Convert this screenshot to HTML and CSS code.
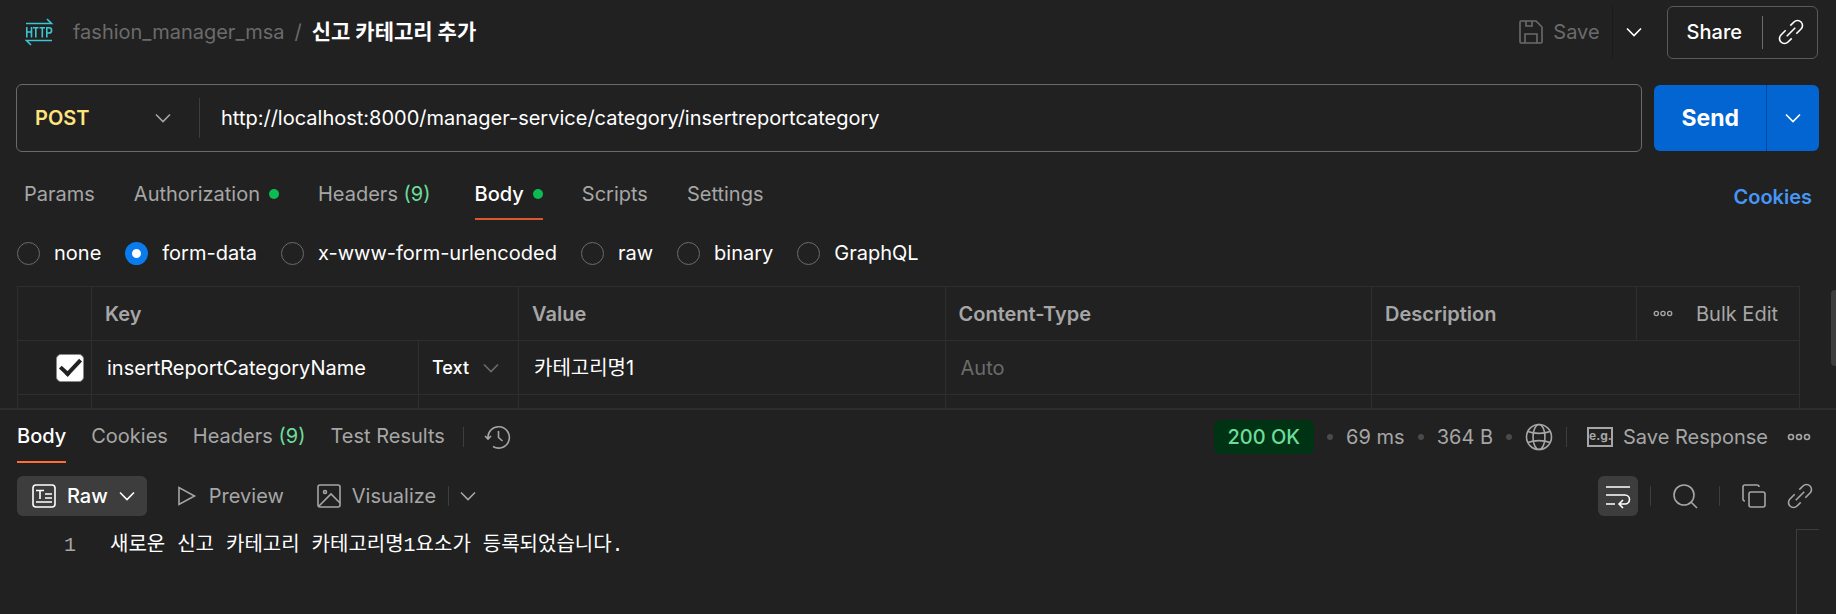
FILE: index.html
```html
<!DOCTYPE html>
<html lang="ko">
<head>
<meta charset="utf-8">
<title>신고 카테고리 추가</title>
<link rel="stylesheet" href="styles.css">
</head>
<body>
<svg class="sprite" aria-hidden="true">
  <symbol id="chevron" viewBox="0 0 16 16"><path d="M1 4.500l7 7 7-7"/></symbol>
  <symbol id="link" viewBox="0 0 24 24"><g transform="rotate(-45 12 12)"><path d="M9.500 7H2.800a5 5 0 0 0 0 10h5.200M14.500 17h6.700a5 5 0 0 0 0-10H16M6 12h12"/></g></symbol>
  <symbol id="more" viewBox="0 0 24 8"><circle cx="4" cy="4" r="2.500"/><circle cx="12" cy="4" r="2.500"/><circle cx="20" cy="4" r="2.500"/></symbol>
</svg>

<section class="request">
  <header class="topbar">
    <svg class="http-icon" viewBox="0 0 28 28" role="img" aria-label="HTTP">
      <path d="M1 5.500h25.500L22 1M27 22.500H1.500L6 27"/>
      <path d="M1.800 9v10.500M6.500 9v10.500M1.800 14h4.700M8 9.800h5.500M10.800 9.800v9.700M14.500 9.800H20M17.300 9.800v9.700M21.800 19.500V9.800H24a2.500 2.500 0 0 1 0 5.200h-2.200"/>
    </svg>
    <nav class="crumbs" aria-label="Breadcrumb"><a href="#">fashion_manager_msa</a><span class="slash">/</span><h1>신고 카테고리 추가</h1></nav>
    <div class="save-group">
      <button class="save" disabled>
        <svg class="icon24" viewBox="0 0 24 24"><path d="M2 1h15l6 6v15a1 1 0 0 1-1 1H2a1 1 0 0 1-1-1V2a1 1 0 0 1 1-1zM7 1v5h6V1M6 23v-9h12v9"/></svg>
        Save
      </button>
      <button class="save-more" aria-label="Save options"><svg class="chev"><use href="#chevron"/></svg></button>
    </div>
    <div class="share-group">
      <button class="share">Share</button>
      <button class="share-link" aria-label="Copy link"><svg class="icon24"><use href="#link"/></svg></button>
    </div>
  </header>

  <form class="url-row">
    <div class="url-box">
      <div class="method">
        <select aria-label="Method"><option>POST</option></select>
        <svg class="chev"><use href="#chevron"/></svg>
      </div>
      <input class="url" type="text" aria-label="Request URL" value="http://localhost:8000/manager-service/category/insertreportcategory">
    </div>
    <div class="send-group">
      <button class="send" type="button">Send</button>
      <button class="send-more" type="button" aria-label="Send options"><svg class="chev"><use href="#chevron"/></svg></button>
    </div>
  </form>

  <nav class="tabs" aria-label="Request sections">
    <a href="#">Params</a>
    <a href="#">Authorization<i class="dot"></i></a>
    <a href="#">Headers <span class="count">(9)</span></a>
    <a href="#" class="active">Body<i class="dot"></i></a>
    <a href="#">Scripts</a>
    <a href="#">Settings</a>
    <a href="#" class="cookies">Cookies</a>
  </nav>

  <div class="modes" role="radiogroup" aria-label="Body type">
    <label><input type="radio" name="mode">none</label>
    <label><input type="radio" name="mode" checked>form-data</label>
    <label><input type="radio" name="mode">x-www-form-urlencoded</label>
    <label><input type="radio" name="mode">raw</label>
    <label><input type="radio" name="mode">binary</label>
    <label><input type="radio" name="mode">GraphQL</label>
  </div>

  <div class="params">
    <table>
      <colgroup><col class="c-check"><col class="c-key"><col class="c-type"><col class="c-main"><col class="c-main"><col class="c-desc"><col class="c-tools"></colgroup>
      <thead>
        <tr>
          <td></td><th colspan="2">Key</th><th>Value</th><th>Content-Type</th><th>Description</th>
          <td><div class="tools"><button aria-label="Columns"><svg class="more-sm"><use href="#more"/></svg></button><button>Bulk Edit</button></div></td>
        </tr>
      </thead>
      <tbody>
        <tr>
          <td class="check"><input type="checkbox" checked aria-label="Enable row"></td>
          <td><input class="cell" type="text" aria-label="Key" value="insertReportCategoryName"></td>
          <td><div class="type"><select aria-label="Type"><option>Text</option></select><svg class="chev"><use href="#chevron"/></svg></div></td>
          <td><input class="cell" type="text" aria-label="Value" value="카테고리명1"></td>
          <td><input class="cell" type="text" aria-label="Content-Type" placeholder="Auto"></td>
          <td colspan="2"><input class="cell" type="text" aria-label="Description"></td>
        </tr>
        <tr><td></td><td></td><td></td><td></td><td></td><td colspan="2"></td></tr>
      </tbody>
    </table>
    <div class="scroll-thumb"></div>
  </div>
</section>

<section class="response">
  <div class="res-head">
    <nav class="res-tabs" aria-label="Response sections">
      <a href="#" class="active">Body</a>
      <a href="#">Cookies</a>
      <a href="#">Headers <span class="count">(9)</span></a>
      <a href="#">Test Results</a>
    </nav>
    <i class="rule"></i>
    <button class="history" aria-label="History"><svg class="icon26" viewBox="0 0 26 26"><path d="M4 14.500A10.700 10.700 0 1 1 9 22.500M1 12l3 3 3-3M14.500 7v6.500l4 3.500"/></svg></button>
    <div class="res-meta">
      <span class="status">200 OK</span><i class="bullet"></i>
      <span>69 ms</span><i class="bullet"></i>
      <span>364 B</span><i class="bullet"></i>
      <button class="globe" aria-label="Network"><svg class="icon28" viewBox="0 0 28 28"><circle cx="14" cy="14" r="12.500"/><ellipse cx="14" cy="14" rx="6" ry="12.500"/><path d="M3 8.500c6 2.500 16 2.500 22 0M3 19.500c6-2.500 16-2.500 22 0"/></svg></button>
      <i class="rule"></i>
      <button class="save-res"><span class="eg">e.g.</span>Save Response</button>
      <button aria-label="More"><svg class="more-lg"><use href="#more"/></svg></button>
    </div>
  </div>

  <div class="toolbar">
    <button class="raw"><svg class="icon24" viewBox="0 0 24 24"><rect x="1" y="1" width="22" height="22" rx="3"/><path d="M4 6.500h8M8 6.500V15M13 10h7M13 14h7M4 18h16"/></svg>Raw<svg class="chev"><use href="#chevron"/></svg></button>
    <button class="preview"><svg class="play" viewBox="0 0 18 20"><path d="M1 1.500v17l15.500-8.500z"/></svg>Preview</button>
    <button class="visualize"><svg class="icon24" viewBox="0 0 24 24"><rect x="1" y="1" width="22" height="22" rx="2"/><circle cx="8" cy="8" r="1.500"/><path d="M2 22l12-12 9 9"/></svg>Visualize</button>
    <i class="rule"></i>
    <button class="vis-more" aria-label="Visualize options"><svg class="chev"><use href="#chevron"/></svg></button>
    <div class="tools-right">
      <button class="wrap" aria-label="Wrap lines"><svg class="icon24" viewBox="0 0 24 24"><path d="M0 3h24M0 11h19a4.500 4.500 0 0 1 0 9h-6M17 16l-4 4 4 4M0 20h9"/></svg></button>
      <i class="rule"></i>
      <button aria-label="Search"><svg class="icon24" viewBox="0 0 24 24"><circle cx="11" cy="11" r="10"/><path d="M18 18l6 6"/></svg></button>
      <i class="rule"></i>
      <button aria-label="Copy"><svg class="icon24" viewBox="0 0 24 24"><rect x="7" y="8" width="16" height="15" rx="2"/><path d="M3 17a2 2 0 0 1-2-2V3a2 2 0 0 1 2-2h12a2 2 0 0 1 2 2"/></svg></button>
      <button aria-label="Copy link"><svg class="icon24"><use href="#link"/></svg></button>
    </div>
  </div>

  <div class="editor">
    <span class="line-no">1</span>
    <code>새로운 신고 카테고리 카테고리명1요소가 등록되었습니다.</code>
    <div class="overview"></div>
  </div>
</section>
</body>
</html>
```
FILE: styles.css
```css
:root {
  --bg: #212121;
  --line: #2e2e2e;
  --muted: #a6a6a6;
  --dim: #6b6b6b;
  --green: #6bdd9a;
  --sans: Inter, "Noto Sans CJK KR", sans-serif;
}
* { box-sizing: border-box; }
body {
  margin: 0;
  height: 100vh;
  display: flex;
  flex-direction: column;
  overflow: hidden;
  background: var(--bg);
  color: #fff;
  font: 400 20px/24px var(--sans);
}
button, input, select {
  font: inherit;
  color: inherit;
  background: none;
  border: 0;
  padding: 0;
  margin: 0;
  outline: 0;
}
select { appearance: none; }
a { color: inherit; text-decoration: none; }
button { display: inline-flex; align-items: center; flex: none; }
svg { fill: none; stroke: currentColor; stroke-width: 1.6; flex: none; display: block; overflow: visible; }
symbol { overflow: visible; }
.sprite { position: absolute; width: 0; height: 0; }
.icon24 { width: 24px; height: 24px; }
.icon26 { width: 26px; height: 26px; }
.icon28 { width: 28px; height: 28px; }
.chev { width: 16px; height: 16px; pointer-events: none; }
.rule { width: 1px; height: 20px; background: #3d3d3d; flex: none; }

.request { display: flex; flex-direction: column; height: 408px; flex: none; overflow: hidden; }

.topbar { display: flex; align-items: center; height: 64px; padding: 0 18px 0 25px; flex: none; }
.http-icon { width: 28px; height: 28px; color: #3fc4d4; }
.crumbs { display: flex; align-items: center; gap: 10px; margin-left: 20px; color: var(--dim); }
.crumbs h1 { margin: 0; font-size: 21px; font-weight: 700; color: #fff; }
.save-group { display: flex; align-items: center; height: 52px; margin-left: auto; }
.save { gap: 10px; height: 52px; padding-right: 12px; border-right: 1px solid #1a1a1a; color: var(--dim); }
.save-more { padding: 0 13px; }
.share-group { display: flex; align-items: center; height: 53px; margin-left: 12px; border: 1px solid #5a5a5a; border-radius: 6px; }
.share { padding: 0 20px 0 19px; height: 33px; font-weight: 500; border-right: 1px solid #6b6b6b; }
.share-link { padding: 0 14px 0 16px; }

.url-row { display: flex; gap: 12px; margin: 20px 17px 0 16px; flex: none; }
.url-box { display: flex; align-items: center; flex: 1; height: 68px; border: 1px solid #6b6b6b; border-radius: 6px; }
.method { display: flex; align-items: center; width: 183px; height: 40px; padding: 0 28px 0 18px; border-right: 1px solid #3d3d3d; }
.method select { flex: 1; color: #ffe47e; font-weight: 600; }
.method .chev { color: var(--muted); }
.url { flex: 1; padding-left: 21px; }
.send-group { display: flex; height: 66px; margin-top: 1px; background: #0265d2; border-radius: 6px; }
.send { padding: 0 27px; font-size: 23px; font-weight: 700; border-right: 1px solid #04489b; }
.send-more { padding: 0 18px; }

.tabs { display: flex; align-items: flex-end; gap: 39px; padding: 30px 24px 0; color: var(--muted); flex: none; }
.tabs a { height: 38px; }
.tabs .active { color: #fff; border-bottom: 2px solid #d9582f; font-weight: 500; }
.tabs .count { margin-right: 5px; }
.tabs .cookies { margin-left: auto; color: #4696f7; font-weight: 600; height: 35px; }
.dot { display: inline-block; width: 10px; height: 10px; margin-left: 9px; border-radius: 50%; background: #0cbb52; vertical-align: 2px; }
.count { color: var(--green); }

.modes { display: flex; gap: 24px; padding: 20px 17px; flex: none; }
.modes label { display: flex; align-items: center; gap: 14px; height: 26px; }
.modes input { appearance: none; width: 23px; height: 23px; border: 1px solid #6b6b6b; border-radius: 50%; }
.modes input:checked { border: 7px solid #097bed; background: #fff; }

.params { position: relative; padding: 0 36px 0 17px; }
table { width: 100%; table-layout: fixed; border-collapse: collapse; }
th, td { height: 54px; padding: 0 0 0 13px; border: 1px solid var(--line); text-align: left; }
th { color: var(--muted); font-weight: 600; }
.c-check { width: 74px; }
.c-key { width: 327px; }
.c-type { width: 100px; }
.c-desc { width: 265px; }
.c-tools { width: 163px; }
.tools { display: flex; gap: 23px; color: var(--muted); margin-left: 3px; }
.more-sm { width: 20px; height: 7px; }
.check { padding-left: 38px; }
.check input {
  display: grid;
  place-items: center;
  appearance: none;
  width: 28px;
  height: 28px;
  border: 1px solid #8a8a8a;
  border-radius: 5px;
  background: #fff;
}
.check input::before { content: ""; width: 17px; height: 8px; border: solid #212121; border-width: 0 0 4px 4px; transform: translateY(-3px) rotate(-47deg); }
.cell { display: block; width: 100%; padding-left: 2px; }
.cell::placeholder { color: var(--dim); opacity: 1; }
.type { display: flex; align-items: center; justify-content: space-between; padding-right: 19px; font-size: 18px; font-weight: 500; }
.type .chev { color: var(--dim); }
.scroll-thumb { position: absolute; top: 4px; right: 0; width: 5px; height: 76px; border-radius: 4px 0 0 4px; background: #3d3d3d; }

.response { flex: 1; display: flex; flex-direction: column; border-top: 2px solid var(--line); }
.res-head { display: flex; align-items: center; height: 53px; padding: 0 25px 0 17px; color: var(--muted); flex: none; }
.res-tabs { display: flex; gap: 25px; height: 53px; padding-top: 14px; }
.res-tabs .active { color: #fff; font-weight: 500; border-bottom: 2px solid #ff6c37; }
.res-head > .rule { margin: 0 20px 0 18px; }
.res-meta { display: flex; align-items: center; margin-left: auto; }
.status { padding: 5px 14px; border-radius: 6px; background: #003214; color: var(--green); font-weight: 500; }
.bullet { width: 6px; height: 6px; margin: 0 13px; border-radius: 50%; background: #4a4a4a; }
.res-meta .rule { margin: 0 20px 0 13px; }
.save-res { gap: 10px; margin-right: 19px; }
.eg { width: 26px; height: 20px; border: 2px solid var(--muted); font-size: 12px; line-height: 14px; font-weight: 700; text-align: center; }
.more-lg { width: 24px; height: 8px; }

.toolbar { display: flex; align-items: center; height: 40px; margin-top: 13px; padding: 0 24px 0 17px; color: var(--muted); flex: none; }
.raw { gap: 11px; height: 40px; padding: 0 12px 0 15px; border-radius: 6px; background: #3d3d3d; color: #fff; font-weight: 500; }
.preview { gap: 13px; margin-left: 31px; }
.play { width: 18px; height: 20px; }
.visualize { gap: 11px; margin: 0 12px 0 33px; }
.toolbar .vis-more { margin-left: 11px; }
.tools-right { display: flex; align-items: center; margin-left: auto; gap: 22px; }
.wrap { justify-content: center; width: 40px; height: 40px; margin-right: -10px; border-radius: 6px; background: #3d3d3d; color: #fff; }

.editor { display: flex; flex: 1; margin-top: 13px; padding-right: 17px; font: 20px/34px "Liberation Mono", "Noto Sans CJK KR", monospace; }
.line-no { width: 76px; text-align: right; color: var(--muted); }
.editor code { flex: 1; margin-left: 34px; font: inherit; }
.overview { width: 23px; border: solid #3d3d3d; border-width: 1px 0 0 1px; }
```
